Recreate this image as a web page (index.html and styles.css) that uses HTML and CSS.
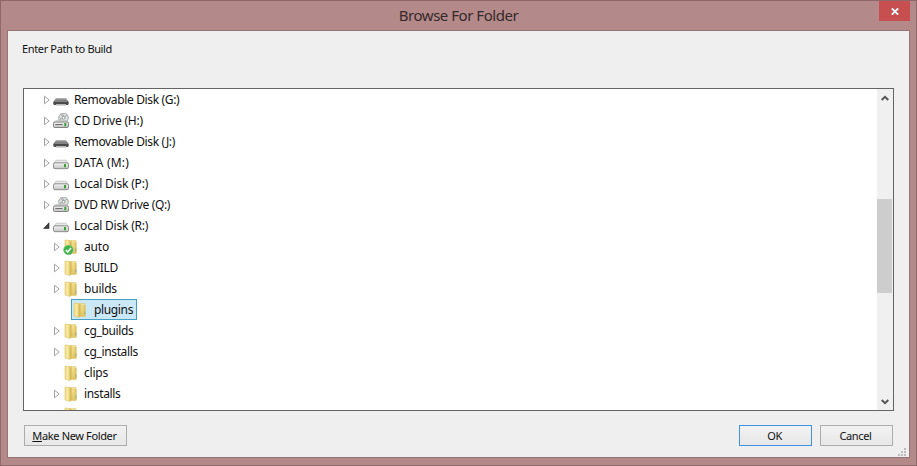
FILE: index.html
```html
<!DOCTYPE html>
<html lang="en">
<head>
<meta charset="utf-8">
<title>Browse For Folder</title>
<link rel="stylesheet" href="styles.css">
</head>
<body>
<svg class="defs" aria-hidden="true">
  <defs>
    <linearGradient id="gold" x1="0" y1="0" x2="1" y2="0"><stop offset="0" stop-color="#f0dc80"/><stop offset=".5" stop-color="#f8eaa6"/><stop offset="1" stop-color="#e6cd70"/></linearGradient>
    <linearGradient id="goldback" x1="0" y1="0" x2="0" y2="1"><stop offset="0" stop-color="#f3e296"/><stop offset="1" stop-color="#e0c563"/></linearGradient>
    <linearGradient id="dark" x1="0" y1="0" x2="0" y2="1"><stop offset="0" stop-color="#b8b8b8"/><stop offset="1" stop-color="#606060"/></linearGradient>
    <linearGradient id="light" x1="0" y1="0" x2="0" y2="1"><stop offset="0" stop-color="#f4f4f4"/><stop offset="1" stop-color="#c4c4c4"/></linearGradient>
    <symbol id="closed" viewBox="0 0 8 10"><path d="M1.5 1.2v7.6L6.2 5z" fill="#fff" stroke="#a3a3a3"/></symbol>
    <symbol id="open" viewBox="0 0 8 10"><path d="M6 1.8v5.7H.6z" fill="#404040" stroke="#262626" stroke-width=".6"/></symbol>
    <symbol id="removable" viewBox="0 0 16 16"><path d="M3 6h10l2.5 3.8H.5z" fill="url(#dark)"/><rect x=".3" y="9" width="15.4" height="4" rx="1.5" fill="#4b4b4b"/><path d="M1.5 9.5h13" stroke="#858585"/><path d="M3 12.8h10" stroke="#b9b9b9" stroke-width="1.6"/></symbol>
    <symbol id="disk" viewBox="0 0 16 16"><path d="M3 5.2h10l2.4 3.4H.6z" fill="#e8e8e8" stroke="#b1b1b1" stroke-width=".6"/><rect x=".5" y="7.8" width="15" height="5.9" rx="1.5" fill="url(#light)" stroke="#858585" stroke-width=".9"/><path d="M12 9v3.2" stroke="#39a135" stroke-width="2"/></symbol>
    <symbol id="optical" viewBox="0 0 16 16"><circle cx="10.5" cy="4.8" r="4.8" fill="#dce2e0" stroke="#939393" stroke-width=".8"/><path d="M10.5 4.8L8 1.2M10.5 4.8L14 2M10.5 4.8L7 6.5" stroke="#9dad9f"/><path d="M10.5 4.8l-.7-3.9" stroke="#b095b7"/><circle cx="10.5" cy="4.8" r="1.4" fill="#fff" stroke="#808080" stroke-width=".7"/><path d="M3 7.4h10l2.3 2.3H.7z" fill="#dcdcdc" stroke="#aaa" stroke-width=".5"/><rect x=".5" y="9" width="15" height="5.5" rx="1.3" fill="url(#light)" stroke="#777" stroke-width=".9"/><path d="M2.3 11.6h7.2" stroke="#666"/><path d="M12.3 10v3.3" stroke="#39a135" stroke-width="2"/></symbol>
    <symbol id="folder" viewBox="0 0 16 16"><path d="M6 1.5h7v13H6z" fill="url(#goldback)" stroke="#d9c36d" stroke-width=".5"/><path d="M11.6 3h2v11.3l-2 .2z" fill="#dfc566"/><path d="M12.9 9.5v3" stroke="#9da894"/><path d="M2 1l5 .6v13.9L2 14z" fill="url(#gold)" stroke="#dbc267" stroke-width=".6"/><path d="M7 2.5l1.6-.8v12L7 15.5z" fill="#d6ba5a"/></symbol>
    <symbol id="synced" viewBox="0 0 16 16"><use href="#folder"/><circle cx="5.4" cy="11" r="4.8" fill="#42b54b" stroke="#79cd7d" stroke-width=".6"/><path d="M2.9 11l1.8 2L8 9" fill="none" stroke="#fff" stroke-width="1.5"/></symbol>
  </defs>
</svg>
<main class="window">
  <header class="titlebar">
    <h1><span>Browse For Folder</span></h1>
    <button class="close" aria-label="Close"><svg viewBox="0 0 8 7"><path d="M.8.3l6.4 6.4M7.2.3L.8 6.7" stroke="#fff" stroke-width="1.7"/></svg></button>
  </header>
  <section class="panel">
    <p class="prompt"><span>Enter Path to Build</span></p>
    <div class="browser">
      <ul class="tree">
        <li class="drive tight"><svg class="arrow"><use href="#closed"/></svg><svg class="icon"><use href="#removable"/></svg><span>Removable Disk (G:)</span></li>
        <li class="drive"><svg class="arrow"><use href="#closed"/></svg><svg class="icon"><use href="#optical"/></svg><span>CD Drive (H:)</span></li>
        <li class="drive tight"><svg class="arrow"><use href="#closed"/></svg><svg class="icon"><use href="#removable"/></svg><span>Removable Disk (J:)</span></li>
        <li class="drive loose"><svg class="arrow"><use href="#closed"/></svg><svg class="icon"><use href="#disk"/></svg><span>DATA (M:)</span></li>
        <li class="drive"><svg class="arrow"><use href="#closed"/></svg><svg class="icon"><use href="#disk"/></svg><span>Local Disk (P:)</span></li>
        <li class="drive tight"><svg class="arrow"><use href="#closed"/></svg><svg class="icon"><use href="#optical"/></svg><span>DVD RW Drive (Q:)</span></li>
        <li class="drive"><svg class="arrow"><use href="#open"/></svg><svg class="icon"><use href="#disk"/></svg><span>Local Disk (R:)</span></li>
        <li class="folder"><svg class="arrow"><use href="#closed"/></svg><svg class="icon"><use href="#synced"/></svg><span>auto</span></li>
        <li class="folder tight"><svg class="arrow"><use href="#closed"/></svg><svg class="icon"><use href="#folder"/></svg><span>BUILD</span></li>
        <li class="folder"><svg class="arrow"><use href="#closed"/></svg><svg class="icon"><use href="#folder"/></svg><span>builds</span></li>
        <li class="child tight"><div class="selected"><svg class="icon"><use href="#folder"/></svg><span>plugins</span></div></li>
        <li class="folder tight"><svg class="arrow"><use href="#closed"/></svg><svg class="icon"><use href="#folder"/></svg><span>cg_builds</span></li>
        <li class="folder tight"><svg class="arrow"><use href="#closed"/></svg><svg class="icon"><use href="#folder"/></svg><span>cg_installs</span></li>
        <li class="folder"><i class="arrow"></i><svg class="icon"><use href="#folder"/></svg><span>clips</span></li>
        <li class="folder tight"><svg class="arrow"><use href="#closed"/></svg><svg class="icon"><use href="#folder"/></svg><span>installs</span></li>
        <li class="folder"><i class="arrow"></i><svg class="icon"><use href="#folder"/></svg></li>
      </ul>
      <div class="scrollbar">
        <svg viewBox="0 0 8 6"><path d="M.7 5L4 1.8 7.3 5" fill="none" stroke="#555" stroke-width="2"/></svg>
        <div class="thumb"></div>
        <svg viewBox="0 0 8 6"><path d="M.7 1L4 4.2 7.3 1" fill="none" stroke="#555" stroke-width="2"/></svg>
      </div>
    </div>
    <footer class="actions">
      <button class="make"><span><u>M</u>ake New Folder</span></button>
      <button class="ok"><span>OK</span></button>
      <button class="cancel"><span>Cancel</span></button>
    </footer>
    <svg class="grip" viewBox="0 0 8 8"><path d="M6 0h2v2H6zM3 3h2v2H3zM6 3h2v2H6zM0 6h2v2H0zM3 6h2v2H3zM6 6h2v2H6z" fill="#bdbdbd"/></svg>
  </section>
</main>
</body>
</html>
```
FILE: styles.css
```css
* { box-sizing: border-box; }
body { margin: 0; font: 12px/20px "Noto Sans", sans-serif; color: #111; }
.defs { position: absolute; width: 0; height: 0; }
.window { width: 917px; height: 466px; padding: 0 6px 7px; background: #b48989; border: 1px solid #8f6969; display: flex; flex-direction: column; }
.titlebar { height: 29px; flex: none; display: grid; grid-template-columns: 31px 1fr 31px; }
.titlebar h1 { grid-column: 2; margin: 0; text-align: center; font: 15px/29px "Noto Sans", sans-serif; letter-spacing: -.47px; color: #352929; }
.close { width: 31px; height: 20px; padding: 0; border: 0; background: #c84f50; display: flex; align-items: center; justify-content: center; }
.close svg { width: 8px; height: 7px; margin-top: 1px; }
.panel { position: relative; flex: 1; width: 903px; min-height: 0; background: #efefef; border: 1px solid #997273; padding: 9px 15px 0; display: flex; flex-direction: column; }
.prompt { margin: 0 0 0 -1px; height: 48px; flex: none; font-size: 11px; line-height: 18px; letter-spacing: -.36px; }
.browser { width: 871px; height: 323px; flex: none; border: 1px solid #646464; background: #fff; display: flex; overflow: hidden; }
.tree { list-style: none; flex: 1; margin: 0; padding: 0; }
.tree li { height: 21px; display: flex; align-items: center; letter-spacing: -.2px; white-space: nowrap; }
.tree .tight { letter-spacing: -.35px; }
.tree .loose { letter-spacing: .2px; }
.drive { padding-left: 19px; }
.folder { padding-left: 29px; }
.child { padding-left: 47px; }
.arrow { width: 8px; height: 10px; flex: none; margin-right: 2px; }
.icon { width: 16px; height: 16px; flex: none; margin-right: 5px; }
.selected { width: 66px; height: 21px; display: flex; align-items: center; border: 1px solid #459fc5; background: #cbe8f6; }
.selected .icon { margin-right: 6px; }
.scrollbar { width: 16px; background: #f0f0f0; display: flex; flex-direction: column; align-items: center; padding: 6px 1px 5px 0; }
.scrollbar svg { width: 8px; height: 6px; flex: none; }
.thumb { width: 15px; height: 94px; background: #cdcdcd; margin: 98px 0 auto; }
.actions { display: flex; align-items: flex-start; margin: 14px 1px 0; gap: 8px; }
.actions button { width: 73px; height: 21px; border: 1px solid #acacac; background: linear-gradient(#f2f2f2, #e7e7e7); padding: 0 2px 0 0; font: 11px/18px "Noto Sans", sans-serif; letter-spacing: -.36px; color: #111; }
.actions .make { width: 103px; margin-right: auto; }
.actions .ok { border-color: #3f94e2; }
.grip { position: absolute; right: 3px; bottom: 1px; width: 8px; height: 8px; }
```
